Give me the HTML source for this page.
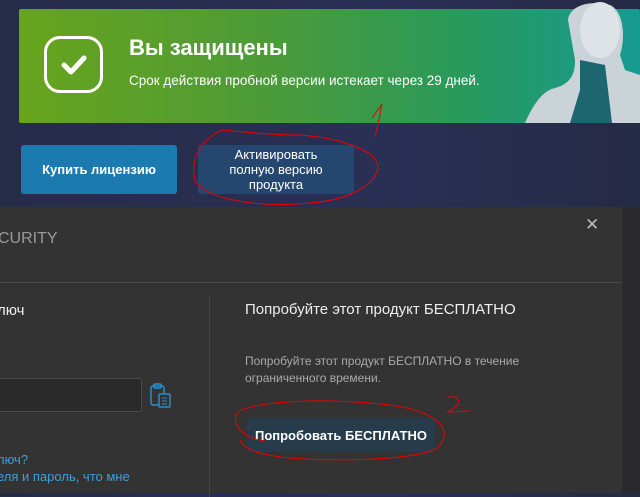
<!DOCTYPE html>
<html><head><meta charset="utf-8"><style>
*{margin:0;padding:0;box-sizing:border-box}
body{width:640px;height:493px;overflow:hidden;background:linear-gradient(90deg,#252c48,#2a2f55 60%,#252a45);font-family:"Liberation Sans","DejaVu Sans",sans-serif;position:relative}
.banner{position:absolute;left:19px;top:9px;width:621px;height:114px;background:linear-gradient(90deg,#68a41c 0%,#4c9b38 40%,#2a9a5a 70%,#169a92 100%);border-radius:2px}
.chk{position:absolute;left:44px;top:36px;width:59px;height:57px;border:3px solid #fff;border-radius:16px}
h1{position:absolute;left:129px;top:35px;color:#fff;font-size:22px;font-weight:bold}
.sub{position:absolute;left:129px;top:73px;color:#fff;font-size:13.5px}
.btn{position:absolute;top:145px;height:49px;border-radius:3px;color:#fff;font-size:13px;display:flex;align-items:center;justify-content:center;text-align:center;line-height:15px}
.dlg{position:absolute;left:0;top:207px;width:622px;height:286px;background:#333333}
.right{position:absolute;left:622px;top:207px;width:18px;height:286px;background:#2a2a2c}
</style></head><body>
<div class="banner"></div>
<div class="chk"><svg width="53" height="51" viewBox="0 0 53 51"><path d="M17 26 L24 33 L37 19" stroke="#fff" stroke-width="5" fill="none" stroke-linecap="round" stroke-linejoin="round"/></svg></div>
<h1>Вы защищены</h1>
<div class="sub">Срок действия пробной версии истекает через 29 дней.</div>
<svg style="position:absolute;left:500px;top:0" width="140" height="123"><path d="M25 123 C35 100 45 90 55 88 C70 84 75 75 75 60 L68 20 C70 5 90 0 110 5 C125 12 125 40 120 55 L125 70 L140 75 L140 123Z" fill="#c9d3d8"/><path d="M80 60 L105 65 L112 123 L70 123 L80 90Z" fill="#1d6670"/><ellipse cx="100" cy="30" rx="20" ry="28" fill="#dde3e6"/></svg>
<div class="btn" style="left:21px;width:156px;background:#1b7bb0;font-weight:bold">Купить лицензию</div>
<div class="btn" style="left:198px;width:156px;background:#24466f">Активировать<br>полную версию<br>продукта</div>
<div class="dlg">
<div style="position:absolute;left:-2px;top:23px;color:#999;font-size:16px">CURITY</div>
<div style="position:absolute;left:585px;top:8px;color:#bbb;font-size:17px">✕</div>
<div style="position:absolute;left:0;top:75px;width:622px;height:1px;background:#4a4a4a"></div>
<div style="position:absolute;left:209px;top:90px;width:1px;height:200px;background:#454545"></div>
<div style="position:absolute;left:-3px;top:95px;color:#eee;font-size:15px">люч</div>
<div style="position:absolute;left:-5px;top:171px;width:147px;height:34px;background:#2a2a2a;border:1px solid #4a4a4a;border-radius:3px"></div>
<svg style="position:absolute;left:150px;top:176px" width="24" height="28"><rect x="1" y="3" width="13" height="19" rx="2" fill="none" stroke="#2a8ccc" stroke-width="1.5"/><rect x="4" y="1" width="7" height="4" rx="1" fill="none" stroke="#2a8ccc" stroke-width="1.5"/><rect x="9" y="11" width="11" height="13" rx="1" fill="#333" stroke="#2a8ccc" stroke-width="1.5"/><path d="M12 15h5M12 18h5M12 21h5" stroke="#2a8ccc"/></svg>
<div style="position:absolute;left:-3px;top:245px;color:#3aa0de;font-size:13px">люч?</div>
<div style="position:absolute;left:-3px;top:262px;color:#3aa0de;font-size:13px">еля и пароль, что мне</div>
<div style="position:absolute;left:245px;top:94px;color:#eee;font-size:15px">Попробуйте этот продукт БЕСПЛАТНО</div>
<div style="position:absolute;left:245px;top:146px;color:#aaa;font-size:12px;line-height:17px">Попробуйте этот продукт БЕСПЛАТНО в течение<br>ограниченного времени.</div>
<div style="position:absolute;left:247px;top:211px;width:188px;height:34px;background:#263c4b;border-radius:3px;color:#fff;font-weight:bold;font-size:13px;display:flex;align-items:center;justify-content:center">Попробовать БЕСПЛАТНО</div>
</div>
<div class="right"></div>
<svg style="position:absolute;left:0;top:0" width="640" height="493" fill="none" stroke="#e00" stroke-width="1">
<path d="M222 130 C200 140 190 160 195 180 C205 200 260 208 310 203 C350 200 375 185 378 168 C378 150 340 138 300 135 C270 135 245 132 222 130"/>
<path d="M375 137 C378 125 380 115 382 104 L372 118"/>
<path d="M265 441 C240 438 228 420 240 410 C270 400 330 398 390 405 C440 412 452 430 440 445 C430 460 340 462 290 458 C260 455 245 450 240 440"/>
<path d="M447 398 C460 393 465 405 447 412 L470 411"/>
</svg>
</body></html>
